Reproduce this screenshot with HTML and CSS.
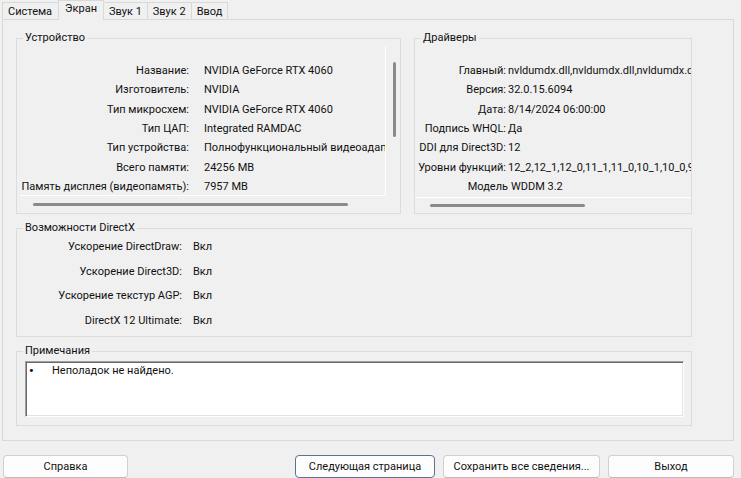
FILE: index.html
```html
<!DOCTYPE html>
<html lang="ru">
<head>
<meta charset="utf-8">
<title>Средство диагностики DirectX</title>
<link rel="stylesheet" href="styles.css">
</head>
<body>
<div class="window">
  <div class="tabs">
    <div class="tab">Система</div>
    <div class="tab active">Экран</div>
    <div class="tab">Звук 1</div>
    <div class="tab">Звук 2</div>
    <div class="tab">Ввод</div>
  </div>
  <div class="panel">
    <div class="top-row">
      <section class="group device">
        <div class="legend">Устройство</div>
        <div class="scroller">
          <div class="viewport">
            <div class="kv">
              <span class="k">Название:</span><span class="v">NVIDIA GeForce RTX 4060</span>
              <span class="k">Изготовитель:</span><span class="v">NVIDIA</span>
              <span class="k">Тип микросхем:</span><span class="v">NVIDIA GeForce RTX 4060</span>
              <span class="k">Тип ЦАП:</span><span class="v">Integrated RAMDAC</span>
              <span class="k">Тип устройства:</span><span class="v">Полнофункциональный видеоадаптер</span>
              <span class="k">Всего памяти:</span><span class="v">24256 MB</span>
              <span class="k">Память дисплея (видеопамять):</span><span class="v">7957 MB</span>
            </div>
          </div>
          <div class="vbar"><div class="vthumb"></div></div>
          <div class="hbar"><div class="hthumb"></div></div>
        </div>
      </section>
      <section class="group drivers">
        <div class="legend">Драйверы</div>
        <div class="scroller">
          <div class="viewport">
            <div class="kv">
              <span class="k">Главный:</span><span class="v">nvldumdx.dll,nvldumdx.dll,nvldumdx.dll,nvldumdx.dll</span>
              <span class="k">Версия:</span><span class="v">32.0.15.6094</span>
              <span class="k">Дата:</span><span class="v">8/14/2024 06:00:00</span>
              <span class="k">Подпись WHQL:</span><span class="v">Да</span>
              <span class="k">DDI для Direct3D:</span><span class="v">12</span>
              <span class="k">Уровни функций:</span><span class="v">12_2,12_1,12_0,11_1,11_0,10_1,10_0,9_3,9_2,9_1</span>
              <span class="k model">Модель</span><span class="v model">WDDM 3.2</span>
            </div>
          </div>
          <div class="hbar"><div class="hthumb"></div></div>
        </div>
      </section>
    </div>
    <section class="group dx">
      <div class="legend">Возможности DirectX</div>
      <div class="kv">
        <span class="k">Ускорение DirectDraw:</span><span class="v">Вкл</span>
        <span class="k">Ускорение Direct3D:</span><span class="v">Вкл</span>
        <span class="k">Ускорение текстур AGP:</span><span class="v">Вкл</span>
        <span class="k">DirectX 12 Ultimate:</span><span class="v">Вкл</span>
      </div>
    </section>
    <section class="group notes">
      <div class="legend">Примечания</div>
      <div class="textbox">
        <div class="note"><span class="bullet">•</span><span>Неполадок не найдено.</span></div>
      </div>
    </section>
  </div>
  <div class="buttons">
    <button class="btn help">Справка</button>
    <div class="btn-group">
      <button class="btn next default">Следующая страница</button>
      <button class="btn save">Сохранить все сведения...</button>
      <button class="btn exit">Выход</button>
    </div>
  </div>
</div>
</body>
</html>
```
FILE: styles.css
```css
* { box-sizing: border-box; }
html, body { margin: 0; padding: 0; background: #f0f0f0; }
body {
  font-family: Roboto, "Noto Sans", "Liberation Sans", sans-serif;
  font-size: 11px;
  color: #111111;
}
.window {
  width: 741px;
  height: 478px;
  padding: 0 7px 0 2px;
  overflow: hidden;
}

/* Tabs */
.tabs {
  display: flex;
  align-items: flex-end;
  height: 19px;
}
.tab {
  height: 17px;
  line-height: 16px;
  padding: 1px 5px 0;
  border: 1px solid #d9d9d9;
  border-bottom: none;
  margin-left: -1px;
  background: #f0f0f0;
}
.tab:first-child { margin-left: 0; padding-left: 5px; padding-right: 6px; }
.tab.active {
  height: 20px;
  padding: 0 6px;
  margin-bottom: -1px;
  position: relative;
  z-index: 1;
  background: #f0f0f0;
}

/* Panel */
.panel {
  height: 422px;
  border: 1px solid #d9d9d9;
  padding: 18px 41px 14px 13px;
}
.top-row {
  display: grid;
  grid-template-columns: 385px 278px;
  column-gap: 13px;
}
.group {
  border: 1px solid #dcdcdc;
}
.legend {
  width: fit-content;
  height: 16px;
  line-height: 16px;
  margin: -9px 0 0 6px;
  padding: 0 2px;
  background: #f0f0f0;
  white-space: nowrap;
}

.device { height: 176px; }
.drivers { height: 176px; }

.scroller { display: grid; }
.device .scroller {
  margin-left: 3px;
  grid-template-columns: 366px 14px;
  grid-template-rows: 150px 17px;
}
.drivers .scroller {
  grid-template-columns: 276px;
  grid-template-rows: 152px 15px;
}
.viewport {
  overflow: hidden;
  border-bottom: 1px solid #ffffff;
}
.device .viewport { border-right: 1px solid #ffffff; }

.kv {
  display: grid;
  white-space: nowrap;
}
.kv .k { text-align: right; }
.kv span { line-height: 16px; }

.device .kv {
  grid-template-columns: 169px max-content;
  column-gap: 15px;
  row-gap: 3.33px;
  padding-top: 17px;
}
.drivers .kv {
  grid-template-columns: 91px max-content;
  column-gap: 2px;
  row-gap: 3.33px;
  padding-top: 17px;
}
.drivers .k.model { margin-right: -2px; }
.drivers .v.model { padding-left: 3px; }

.dx .kv {
  grid-template-columns: 165px max-content;
  column-gap: 11px;
  row-gap: 8.67px;
  padding-top: 3px;
}
.dx { height: 109px; margin-top: 14px; }

.vthumb {
  width: 3px;
  height: 75px;
  margin: 16px 0 0 7px;
  background: #8a8a8a;
  border-radius: 2px;
}
.hbar { grid-column: 1 / -1; }
.hthumb {
  height: 3px;
  background: #8a8a8a;
  border-radius: 2px;
}
.device .hthumb { width: 315px; margin: 7px 0 0 13px; }
.drivers .hthumb { width: 155px; margin: 6px 0 0 15px; }

/* Notes */
.notes { height: 75px; margin-top: 14px; }
.textbox {
  margin: 2px 0 0 8px;
  width: 659px;
  height: 56px;
  background: #ffffff;
  border-top: 1px solid #a0a0a0;
  border-left: 1px solid #a0a0a0;
  border-right: 1px solid #ffffff;
  border-bottom: 1px solid #ffffff;
  box-shadow: inset 1px 1px 0 #696969, inset -1px -1px 0 #e3e3e3;
  padding: 1px 0 0 3px;
}
.note { display: flex; line-height: 16px; }
.bullet { width: 23px; font-size: 13px; font-weight: bold; }

/* Buttons */
.buttons {
  display: flex;
  justify-content: space-between;
  margin-top: 14px;
  padding-left: 1px;
}
.btn-group { display: flex; gap: 8px; }
.btn {
  height: 23px;
  font: inherit;
  color: #111111;
  background: #fdfdfd;
  border: 1px solid #d0d0d0;
  border-bottom-color: #bcbcbc;
  border-radius: 4px;
  padding: 0;
}
.help { width: 125px; }
.next { width: 140px; }
.save { width: 157px; }
.exit { width: 126px; }
.btn.default { border-color: #5b738c; }
```
